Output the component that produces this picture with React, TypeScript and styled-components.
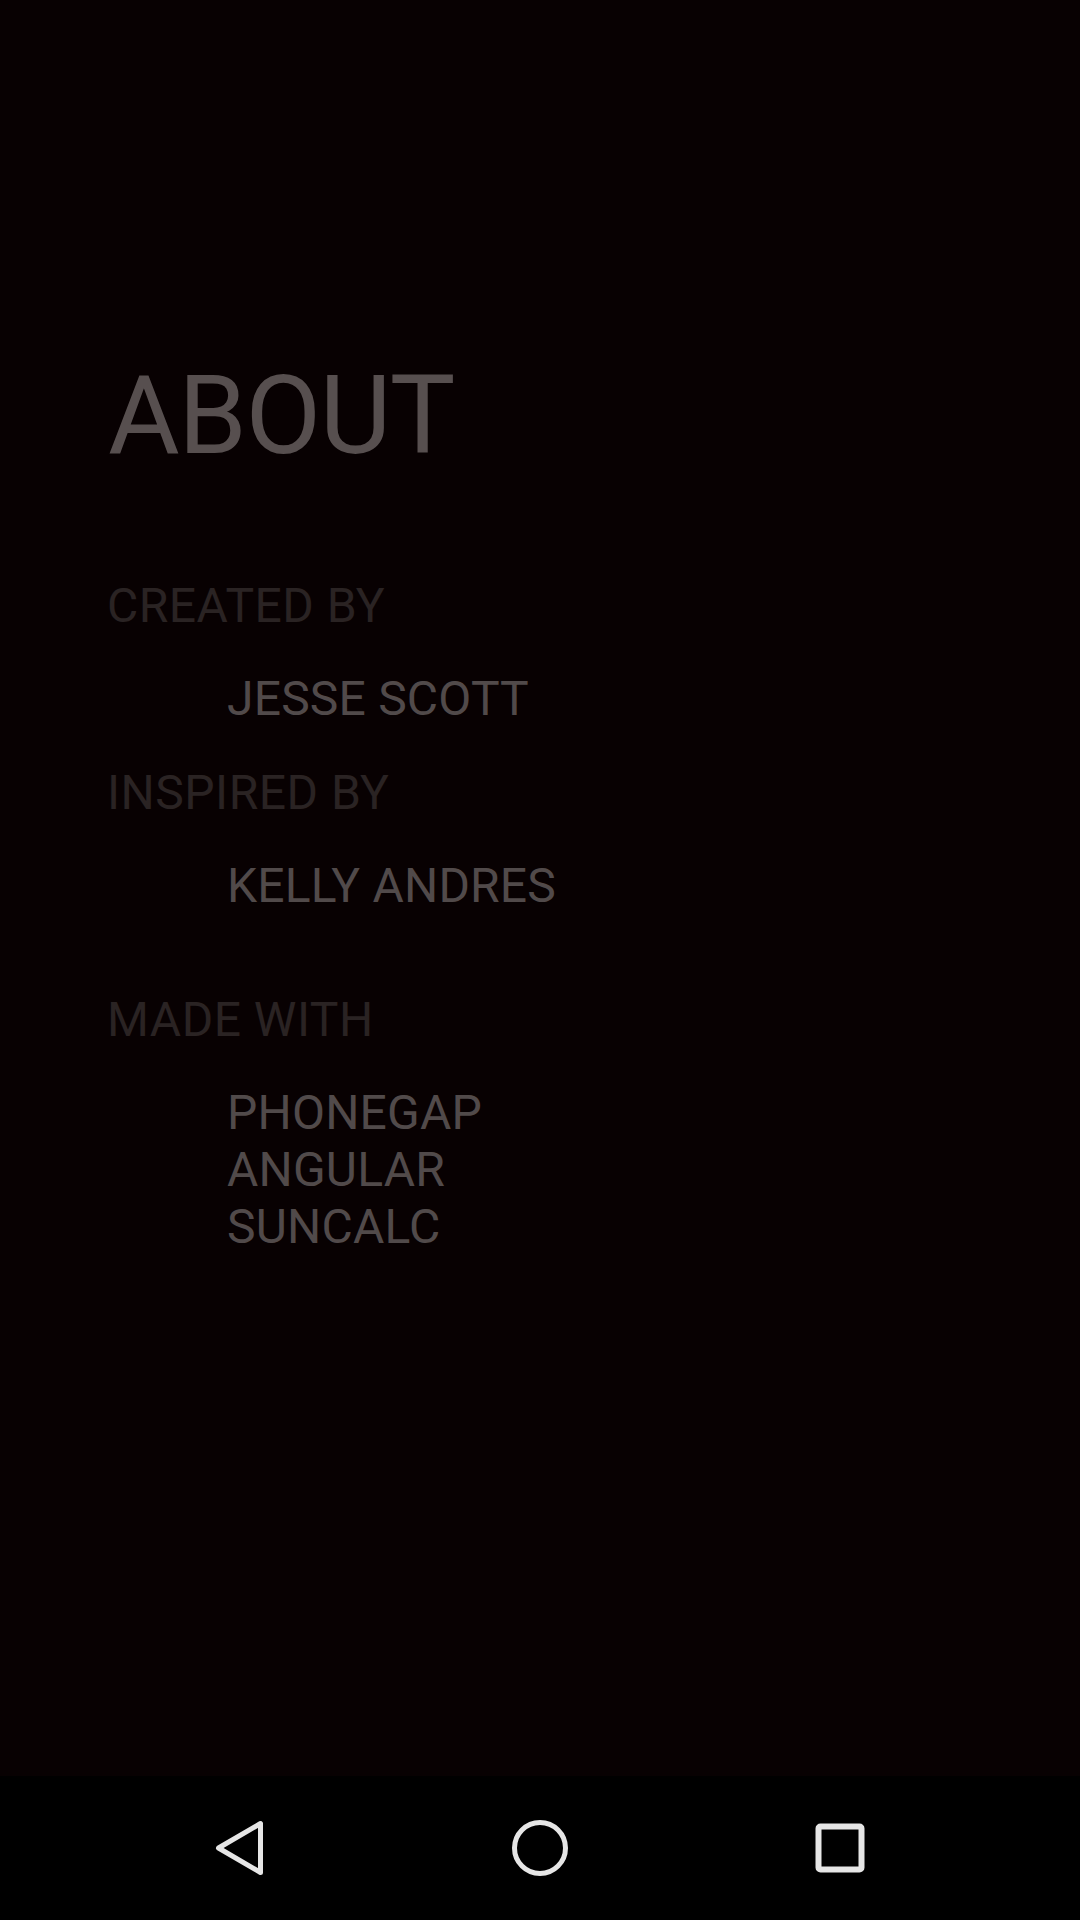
import React from "react";
import styled, { createGlobalStyle } from "styled-components";

const GlobalStyle = createGlobalStyle`
  html, body {
    margin: 0;
    padding: 0;
    background: #080102;
  }
  #root {
    min-height: 1920px;
  }
`;

const Screen = styled.div`
  width: 1080px;
  height: 1920px;
  display: flex;
  flex-direction: column;
  background: #080102;
  font-family: Roboto, "Noto Sans", "Liberation Sans", sans-serif;
`;

const Content = styled.main`
  flex: 1;
  display: flex;
  flex-direction: column;
  align-items: flex-start;
  padding: 361px 0 0 107px;
`;

const Title = styled.h1`
  margin: 0 0 111px 1px;
  font-size: 110px;
  line-height: 110px;
  font-weight: 400;
  letter-spacing: -1.4px;
  color: #574f4f;
`;

const Section = styled.section<{ $extraTop?: number }>`
  display: flex;
  flex-direction: column;
  margin-top: ${(p) => p.$extraTop ?? 0}px;
  margin-bottom: 46px;
`;

const Label = styled.h2<{ $gap?: number }>`
  margin: 0 0 ${(p) => p.$gap ?? 45}px 0;
  font-size: 48px;
  line-height: 48px;
  font-weight: 400;
  letter-spacing: 0.5px;
  color: #2a2323;
`;

const ValueList = styled.ul<{ $lineHeight: number }>`
  list-style: none;
  margin: 0 0 0 120px;
  padding: 0;
  font-size: 48px;
  line-height: ${(p) => p.$lineHeight}px;
  letter-spacing: 0.2px;
  color: #514a4a;
`;

const Value = styled.li``;

const NavBar = styled.nav`
  height: 144px;
  background: #000000;
  display: flex;
  justify-content: center;
  align-items: center;
`;

const NavButton = styled.div`
  width: 300px;
  height: 144px;
  display: flex;
  align-items: center;
  justify-content: center;
`;

const Icon = styled.svg`
  width: 60px;
  height: 60px;
  overflow: visible;
`;

export default function App() {
  return (
    <>
      <GlobalStyle />
      <Screen>
        <Content>
          <Title>ABOUT</Title>
          <Section>
            <Label>CREATED BY</Label>
            <ValueList $lineHeight={48}>
              <Value>JESSE SCOTT</Value>
            </ValueList>
          </Section>
          <Section>
            <Label>INSPIRED BY</Label>
            <ValueList $lineHeight={48}>
              <Value>KELLY ANDRES</Value>
            </ValueList>
          </Section>
          <Section $extraTop={40}>
            <Label $gap={40}>MADE WITH</Label>
            <ValueList $lineHeight={57}>
              <Value>PHONEGAP</Value>
              <Value>ANGULAR</Value>
              <Value>SUNCALC</Value>
            </ValueList>
          </Section>
        </Content>
        <NavBar>
          <NavButton>
            <Icon viewBox="-30 -30 60 60">
              <polygon
                points="-21.5,0 20.5,-24.5 20.5,24.5"
                fill="none"
                stroke="#e6e6e6"
                strokeWidth={5}
                strokeLinejoin="round"
              />
            </Icon>
          </NavButton>
          <NavButton>
            <Icon viewBox="-30 -30 60 60">
              <circle cx={0} cy={0} r={25.5} fill="none" stroke="#e6e6e6" strokeWidth={5} />
            </Icon>
          </NavButton>
          <NavButton>
            <Icon viewBox="-30 -30 60 60">
              <rect
                x={-21.5}
                y={-21.5}
                width={43}
                height={43}
                rx={2}
                fill="none"
                stroke="#e6e6e6"
                strokeWidth={6}
              />
            </Icon>
          </NavButton>
        </NavBar>
      </Screen>
    </>
  );
}
